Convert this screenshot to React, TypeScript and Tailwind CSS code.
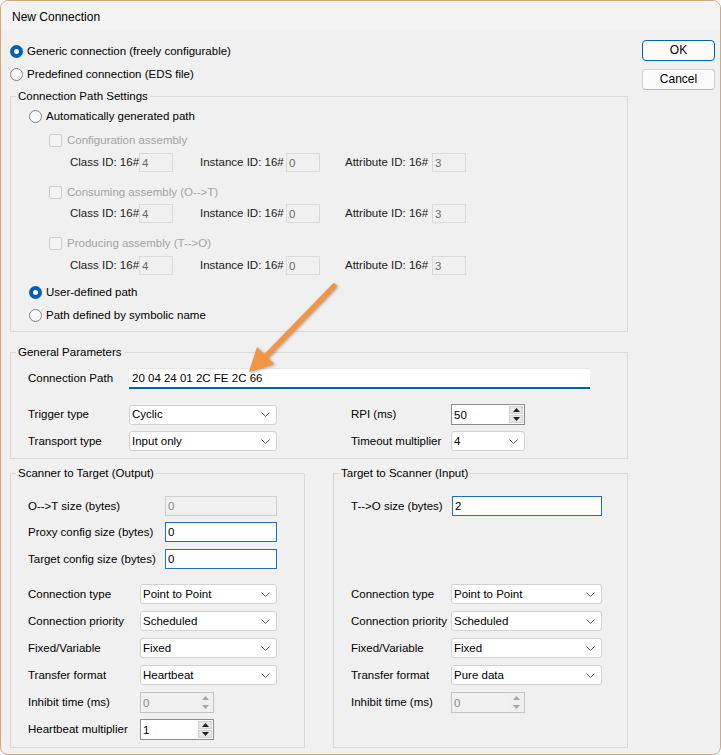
import React from "react";

function Radio({ checked }: { checked?: boolean }) {
  return checked ? (
    <span className="w-[13px] h-[13px] rounded-full bg-[#005fb8] flex items-center justify-center shrink-0">
      <span className="w-[5px] h-[5px] rounded-full bg-white" />
    </span>
  ) : (
    <span className="w-[13px] h-[13px] rounded-full border border-[#858585] bg-[#f7f7f7] shrink-0" />
  );
}

function CheckBox() {
  return <span className="w-[13px] h-[13px] rounded-[2px] border border-[#cdcdcd] bg-[#f4f4f4] shrink-0" />;
}

function Chevron() {
  return (
    <svg width="9" height="5" viewBox="0 0 9 5" className="shrink-0">
      <polyline points="0.5,0.5 4.5,4.5 8.5,0.5" fill="none" stroke="#606060" strokeWidth="1" />
    </svg>
  );
}

function Select({ value, w }: { value: string; w: string }) {
  return (
    <div className={`${w} h-[20px] bg-white border border-[#d2d2d2] rounded-[3px] flex items-center pl-[2px] pr-[6px] shrink-0`}>
      <span className="flex-1 text-black pt-px">{value}</span>
      <Chevron />
    </div>
  );
}

function Tri({ up, color }: { up?: boolean; color: string }) {
  return (
    <svg width="7" height="4" viewBox="0 0 7 4">
      {up ? <polygon points="0,4 7,4 3.5,0" fill={color} /> : <polygon points="0,0 7,0 3.5,4" fill={color} />}
    </svg>
  );
}

function Spin({ value, w, disabled }: { value: string; w: string; disabled?: boolean }) {
  return (
    <div
      className={`${w} h-[21px] flex shrink-0 border ${
        disabled ? "border-[#c4c4c4] bg-[#f0f0f0] text-[#8a8a8a]" : "border-[#8c8c8c] bg-white text-black"
      }`}
    >
      <span className="flex-1 pl-[2px] leading-[20px]">{value}</span>
      <div className="w-[16px] flex flex-col p-px gap-px">
        <div className={`flex-1 flex items-center justify-center ${disabled ? "bg-[#efefef]" : "bg-[#e6e6e6] border border-[#d0d0d0]"}`}>
          <Tri up color={disabled ? "#a6a6a6" : "#202020"} />
        </div>
        <div className={`flex-1 flex items-center justify-center ${disabled ? "bg-[#efefef]" : "bg-[#e6e6e6] border border-[#d0d0d0]"}`}>
          <Tri color={disabled ? "#a6a6a6" : "#202020"} />
        </div>
      </div>
    </div>
  );
}

function TextBox({ value, w, disabled }: { value: string; w: string; disabled?: boolean }) {
  return (
    <div
      className={`${w} h-[20px] shrink-0 border pl-[2px] leading-[19px] ${
        disabled ? "border-[#cfcfcf] bg-[#f0f0f0] text-[#8a8a8a]" : "border-[#1f6fc1] bg-white text-black"
      }`}
    >
      {value}
    </div>
  );
}

function IdBox({ value }: { value: string }) {
  return (
    <div className="w-[34px] h-[19px] shrink-0 border border-[#dadada] bg-[#f0f0f0] pl-[2px] leading-[18px] text-[#6a6a6a]">
      {value}
    </div>
  );
}

function IdRow({ mt }: { mt: string }) {
  return (
    <div className={`${mt} h-[19px] flex items-center pl-[59px] text-[#1a1a1a]`}>
      <span className="w-[69px] shrink-0 pt-px">Class ID: 16#</span>
      <IdBox value="4" />
      <span className="w-[86px] shrink-0 ml-[27px] pt-px">Instance ID: 16#</span>
      <IdBox value="0" />
      <span className="w-[87px] shrink-0 ml-[25px] pt-px">Attribute ID: 16#</span>
      <IdBox value="3" />
    </div>
  );
}

function CheckRow({ mt, label }: { mt: string; label: string }) {
  return (
    <div className={`${mt} h-[20px] flex items-center pl-[38px] gap-[5px] text-[#a3a3a3]`}>
      <CheckBox />
      <span className="pt-px">{label}</span>
    </div>
  );
}

function RadioRow({ mt, label, checked, pl }: { mt: string; label: string; checked?: boolean; pl: string }) {
  return (
    <div className={`${mt} ${pl} h-[20px] flex items-center gap-[4px] text-black`}>
      <Radio checked={checked} />
      <span className="pt-px">{label}</span>
    </div>
  );
}

function Legend({ children }: { children: React.ReactNode }) {
  return <legend className="ml-[5px] px-[2px] leading-[15px] text-black">{children}</legend>;
}

function LabeledRow({
  mt,
  label,
  lw,
  children,
}: {
  mt: string;
  label: string;
  lw: string;
  children: React.ReactNode;
}) {
  return (
    <div className={`${mt} h-[20px] flex items-center pl-[17px]`}>
      <span className={`${lw} shrink-0 text-black pt-px`}>{label}</span>
      {children}
    </div>
  );
}

export default function App() {
  return (
    <div className="w-[721px] h-[755px] bg-white font-['Liberation_Sans',Arial,sans-serif] text-[11.5px] whitespace-nowrap">
      <div className="relative w-[721px] h-[755px] border border-[#d6a878] rounded-[8px] overflow-hidden bg-[#f0f0f0] flex flex-col">
        {/* Title bar */}
        <div className="h-[29px] shrink-0 bg-[#f3f3f3] flex items-center pl-[11px] pt-[3px] text-[12px] text-black">
          New Connection
        </div>

        {/* Body */}
        <div className="flex-1 flex">
          {/* Left column */}
          <div className="ml-[9px] w-[618px] flex flex-col">
            <RadioRow mt="mt-[11px]" pl="pl-0" label="Generic connection (freely configurable)" checked />
            <RadioRow mt="mt-[3px]" pl="pl-0" label="Predefined connection (EDS file)" />

            {/* Connection Path Settings */}
            <fieldset className="mt-[5px] border border-[#d9d9d9]">
              <Legend>Connection Path Settings</Legend>
              <div className="flex flex-col pb-[6px]">
                <RadioRow mt="mt-[2px]" pl="pl-[18px]" label="Automatically generated path" />
                <CheckRow mt="mt-[4px]" label="Configuration assembly" />
                <IdRow mt="mt-[3px]" />
                <CheckRow mt="mt-[10px]" label="Consuming assembly (O-->T)" />
                <IdRow mt="mt-[2px]" />
                <CheckRow mt="mt-[10px]" label="Producing assembly (T-->O)" />
                <IdRow mt="mt-[3px]" />
                <RadioRow mt="mt-[7px]" pl="pl-[18px]" label="User-defined path" checked />
                <RadioRow mt="mt-[3px]" pl="pl-[18px]" label="Path defined by symbolic name" />
              </div>
            </fieldset>

            {/* General Parameters */}
            <fieldset className="mt-[13px] border border-[#d9d9d9]">
              <Legend>General Parameters</Legend>
              <div className="flex flex-col pb-[7px]">
                <div className="mt-[8px] h-[21px] flex items-center pl-[17px]">
                  <span className="w-[101px] shrink-0 text-black pt-px">Connection Path</span>
                  <div className="w-[461px] h-[21px] bg-white border-t border-[#e6e6e6] border-b-2 border-b-[#005fb8] pl-[3px] leading-[19px] text-black">
                    20 04 24 01 2C FE 2C 66
                  </div>
                </div>
                <div className="mt-[15px] h-[21px] flex items-center pl-[17px]">
                  <span className="w-[101px] shrink-0 text-black pt-px">Trigger type</span>
                  <Select value="Cyclic" w="w-[148px]" />
                  <span className="w-[100px] shrink-0 ml-[74px] text-black pt-px">RPI (ms)</span>
                  <Spin value="50" w="w-[74px]" />
                </div>
                <div className="mt-[6px] h-[20px] flex items-center pl-[17px]">
                  <span className="w-[101px] shrink-0 text-black pt-px">Transport type</span>
                  <Select value="Input only" w="w-[148px]" />
                  <span className="w-[100px] shrink-0 ml-[74px] text-black pt-px">Timeout multiplier</span>
                  <Select value="4" w="w-[74px]" />
                </div>
              </div>
            </fieldset>

            {/* Scanner / Target groups */}
            <div className="mt-[7px] flex gap-[28px]">
              <fieldset className="w-[295px] border border-[#d9d9d9]">
                <Legend>Scanner to Target (Output)</Legend>
                <div className="flex flex-col pb-[8px]">
                  <LabeledRow mt="mt-[15px]" label="O-->T size (bytes)" lw="w-[137px]">
                    <TextBox value="0" w="w-[112px]" disabled />
                  </LabeledRow>
                  <LabeledRow mt="mt-[6px]" label="Proxy config size (bytes)" lw="w-[137px]">
                    <TextBox value="0" w="w-[112px]" />
                  </LabeledRow>
                  <LabeledRow mt="mt-[7px]" label="Target config size (bytes)" lw="w-[137px]">
                    <TextBox value="0" w="w-[112px]" />
                  </LabeledRow>
                  <LabeledRow mt="mt-[15px]" label="Connection type" lw="w-[112px]">
                    <Select value="Point to Point" w="w-[137px]" />
                  </LabeledRow>
                  <LabeledRow mt="mt-[7px]" label="Connection priority" lw="w-[112px]">
                    <Select value="Scheduled" w="w-[137px]" />
                  </LabeledRow>
                  <LabeledRow mt="mt-[7px]" label="Fixed/Variable" lw="w-[112px]">
                    <Select value="Fixed" w="w-[137px]" />
                  </LabeledRow>
                  <LabeledRow mt="mt-[7px]" label="Transfer format" lw="w-[112px]">
                    <Select value="Heartbeat" w="w-[137px]" />
                  </LabeledRow>
                  <LabeledRow mt="mt-[7px]" label="Inhibit time (ms)" lw="w-[112px]">
                    <Spin value="0" w="w-[74px]" disabled />
                  </LabeledRow>
                  <LabeledRow mt="mt-[7px]" label="Heartbeat multiplier" lw="w-[112px]">
                    <Spin value="1" w="w-[74px]" />
                  </LabeledRow>
                </div>
              </fieldset>

              <fieldset className="w-[295px] border border-[#d9d9d9]">
                <Legend>Target to Scanner (Input)</Legend>
                <div className="flex flex-col pb-[8px]">
                  <LabeledRow mt="mt-[15px]" label="T-->O size (bytes)" lw="w-[101px]">
                    <TextBox value="2" w="w-[150px]" />
                  </LabeledRow>
                  <LabeledRow mt="mt-[68px]" label="Connection type" lw="w-[100px]">
                    <Select value="Point to Point" w="w-[151px]" />
                  </LabeledRow>
                  <LabeledRow mt="mt-[7px]" label="Connection priority" lw="w-[100px]">
                    <Select value="Scheduled" w="w-[151px]" />
                  </LabeledRow>
                  <LabeledRow mt="mt-[7px]" label="Fixed/Variable" lw="w-[100px]">
                    <Select value="Fixed" w="w-[151px]" />
                  </LabeledRow>
                  <LabeledRow mt="mt-[7px]" label="Transfer format" lw="w-[100px]">
                    <Select value="Pure data" w="w-[151px]" />
                  </LabeledRow>
                  <LabeledRow mt="mt-[7px]" label="Inhibit time (ms)" lw="w-[100px]">
                    <Spin value="0" w="w-[74px]" disabled />
                  </LabeledRow>
                </div>
              </fieldset>
            </div>
          </div>

          {/* Right buttons */}
          <div className="ml-[14px] w-[73px] flex flex-col">
            <button className="mt-[10px] h-[21px] w-[73px] rounded-[4px] border border-[#005fb8] bg-[#fbfbfb] text-[12px] text-black leading-[19px]">
              OK
            </button>
            <button className="mt-[8px] h-[21px] w-[73px] rounded-[4px] border border-[#d0d0d0] border-b-[#b5b5b5] bg-[#fbfbfb] text-[12px] text-black leading-[19px]">
              Cancel
            </button>
          </div>
        </div>

        {/* Annotation arrow */}
        <svg
          className="absolute left-[-1px] top-[-1px] pointer-events-none"
          width="721"
          height="755"
          viewBox="0 0 721 755"
          style={{ filter: "drop-shadow(1.5px 1.5px 1.5px rgba(0,0,0,0.35))" }}
        >
          <line x1="334" y1="286" x2="266" y2="356" stroke="#f7943e" strokeWidth="5" strokeLinecap="round" />
          <polygon points="249,372 274,364 257,347" fill="#f7943e" />
        </svg>
      </div>
    </div>
  );
}
